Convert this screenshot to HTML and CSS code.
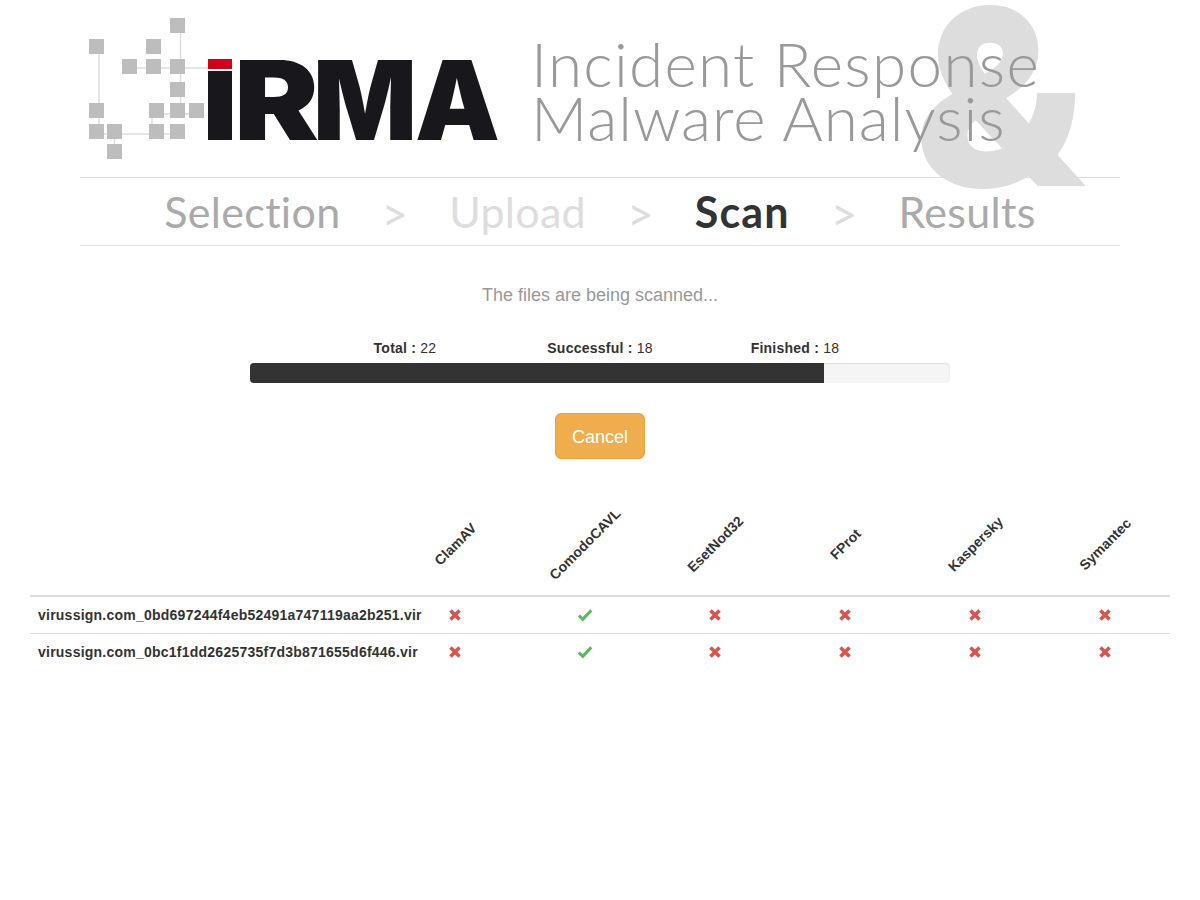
FILE: index.html
```html
<!DOCTYPE html>
<html lang="en">
<head>
<meta charset="utf-8">
<title>IRMA</title>
<link rel="stylesheet" href="styles.css">
</head>
<body>
<div class="page">
  <header class="masthead">
    <svg class="logo" width="430" height="177" viewBox="80 0 430 177" role="img" aria-label="IRMA">
      <g class="logo-lines">
        <path d="M180.500 33V103M99 54V124M137 68H208M104 134H107M122 134H170M164 114H189M152 118V124M114.500 139V144M99 118V124"/>
      </g>
      <g class="logo-nodes">
        <rect x="170" y="18" width="15" height="15"/>
        <rect x="89" y="39" width="15" height="15"/>
        <rect x="146" y="39" width="15" height="15"/>
        <rect x="122" y="59" width="15" height="15"/>
        <rect x="146" y="59" width="15" height="15"/>
        <rect x="170" y="59" width="15" height="15"/>
        <rect x="170" y="82" width="15" height="15"/>
        <rect x="89" y="103" width="15" height="15"/>
        <rect x="149" y="103" width="15" height="15"/>
        <rect x="170" y="103" width="15" height="15"/>
        <rect x="189" y="103" width="15" height="15"/>
        <rect x="89" y="124" width="15" height="15"/>
        <rect x="107" y="124" width="15" height="15"/>
        <rect x="149" y="124" width="15" height="15"/>
        <rect x="170" y="124" width="15" height="15"/>
        <rect x="107" y="144" width="15" height="15"/>
      </g>
      <rect class="logo-red" x="208" y="59" width="24" height="10"/>
      <rect class="logo-black" x="208" y="71" width="24" height="69"/>
      <text class="logo-text" x="234" y="139.500" textLength="85" lengthAdjust="spacingAndGlyphs">R</text>
      <text class="logo-text" x="313" y="139.500" textLength="104" lengthAdjust="spacingAndGlyphs">M</text>
      <text class="logo-text" x="415" y="139.500" textLength="85" lengthAdjust="spacingAndGlyphs">A</text>
    </svg>
    <h1 class="title"><span class="t1">Incident Response</span><br><span class="t2">Malware Analysis</span></h1>
    <span class="amp">&amp;</span>
  </header>

  <nav class="steps">
    <span class="step step-done s-selection">Selection</span>
    <span class="sep">&gt;</span>
    <span class="step step-off s-upload">Upload</span>
    <span class="sep">&gt;</span>
    <span class="step step-active s-scan">Scan</span>
    <span class="sep">&gt;</span>
    <span class="step step-done s-results">Results</span>
  </nav>

  <p class="message">The files are being scanned...</p>

  <div class="stats">
    <div><b>Total :</b> 22</div>
    <div><b>Successful :</b> 18</div>
    <div><b>Finished :</b> 18</div>
  </div>
  <div class="progress"><div class="progress-bar" style="width:82%"></div></div>

  <div class="actions"><button class="btn-cancel" type="button">Cancel</button></div>

  <table class="results">
    <colgroup>
      <col class="col-name">
      <col class="col-av"><col class="col-av"><col class="col-av"><col class="col-av"><col class="col-av"><col class="col-av">
    </colgroup>
    <thead>
      <tr>
        <th></th>
        <th><span>ClamAV</span></th>
        <th><span>ComodoCAVL</span></th>
        <th><span>EsetNod32</span></th>
        <th><span>FProt</span></th>
        <th><span>Kaspersky</span></th>
        <th><span>Symantec</span></th>
      </tr>
    </thead>
    <tbody>
      <tr>
        <td class="name">virussign.com_0bd697244f4eb52491a747119aa2b251.vir</td>
        <td><svg class="ic no" viewBox="0 0 14 14"><path d="M2.500 2.500L11.500 11.500M11.500 2.500L2.500 11.500"/></svg></td>
        <td><svg class="ic yes" viewBox="0 0 14 14"><path d="M0.800 7.500L4.800 11.300L13.300 2.300"/></svg></td>
        <td><svg class="ic no" viewBox="0 0 14 14"><path d="M2.500 2.500L11.500 11.500M11.500 2.500L2.500 11.500"/></svg></td>
        <td><svg class="ic no" viewBox="0 0 14 14"><path d="M2.500 2.500L11.500 11.500M11.500 2.500L2.500 11.500"/></svg></td>
        <td><svg class="ic no" viewBox="0 0 14 14"><path d="M2.500 2.500L11.500 11.500M11.500 2.500L2.500 11.500"/></svg></td>
        <td><svg class="ic no" viewBox="0 0 14 14"><path d="M2.500 2.500L11.500 11.500M11.500 2.500L2.500 11.500"/></svg></td>
      </tr>
      <tr>
        <td class="name">virussign.com_0bc1f1dd2625735f7d3b871655d6f446.vir</td>
        <td><svg class="ic no" viewBox="0 0 14 14"><path d="M2.500 2.500L11.500 11.500M11.500 2.500L2.500 11.500"/></svg></td>
        <td><svg class="ic yes" viewBox="0 0 14 14"><path d="M0.800 7.500L4.800 11.300L13.300 2.300"/></svg></td>
        <td><svg class="ic no" viewBox="0 0 14 14"><path d="M2.500 2.500L11.500 11.500M11.500 2.500L2.500 11.500"/></svg></td>
        <td><svg class="ic no" viewBox="0 0 14 14"><path d="M2.500 2.500L11.500 11.500M11.500 2.500L2.500 11.500"/></svg></td>
        <td><svg class="ic no" viewBox="0 0 14 14"><path d="M2.500 2.500L11.500 11.500M11.500 2.500L2.500 11.500"/></svg></td>
        <td><svg class="ic no" viewBox="0 0 14 14"><path d="M2.500 2.500L11.500 11.500M11.500 2.500L2.500 11.500"/></svg></td>
      </tr>
    </tbody>
  </table>
</div>
</body>
</html>
```
FILE: styles.css
```css
* { box-sizing: border-box; }
html, body { margin: 0; padding: 0; background: #fff; }
body { font-family: "Liberation Sans", Arial, sans-serif; font-size: 14px; line-height: 20px; color: #333; }
.page { width: 1140px; margin: 0 auto; }

.masthead {
  position: relative;
  display: flex;
  width: 1040px;
  height: 178px;
  margin: 0 auto;
  border-bottom: 1px solid #ddd;
}
.logo { display: block; flex: none; }
.logo-lines path { fill: none; stroke: #ddd; stroke-width: 1.500; }
.logo-nodes rect { fill: #bdbdbd; }
.logo-red { fill: #d0021b; }
.logo-black { fill: #18181c; }
.logo-text { font-family: Inter, "Liberation Sans", sans-serif; font-weight: 900; font-size: 110px; fill: #18181c; }

.title {
  position: relative;
  z-index: 2;
  margin: 36px 0 0 21px;
  font-family: Lato, sans-serif;
  font-weight: 300;
  font-size: 62px;
  line-height: 54px;
  color: #999;
  white-space: nowrap;
}
.t1 { letter-spacing: 1.300px; }
.t2 { letter-spacing: 1px; }
.amp {
  position: absolute;
  z-index: 1;
  left: 834px;
  top: -53px;
  font-family: Inter, sans-serif;
  font-weight: 900;
  font-size: 245px;
  line-height: 300px;
  color: #ddd;
}

.steps {
  display: flex;
  justify-content: center;
  align-items: center;
  gap: 41px;
  width: 1040px;
  height: 68px;
  margin: 0 auto;
  border-bottom: 1px solid #ddd;
  font-family: Lato, sans-serif;
  font-size: 43px;
  letter-spacing: .3px;
}
.step-done { color: #aaa; }
.step-off { color: #ddd; }
.step-active { color: #333; font-weight: 700; letter-spacing: 1.200px; }
.sep { color: #ddd; font-size: 46px; letter-spacing: 0; padding-top: 4px; }

.message {
  margin: 39px 0 0;
  text-align: center;
  font-size: 18px;
  line-height: 20px;
  color: #999;
}
.stats {
  display: grid;
  grid-template-columns: repeat(3, 195px);
  justify-content: center;
  margin-top: 33px;
  text-align: center;
  letter-spacing: .235px;
}
.progress {
  width: 700px;
  height: 20px;
  margin: 5px auto 0;
  border-radius: 4px;
  overflow: hidden;
  background: #f5f5f5;
  box-shadow: inset 0 1px 2px rgba(0,0,0,.1);
}
.progress-bar { height: 100%; background: #333; }

.actions { margin-top: 30px; text-align: center; }
.btn-cancel {
  display: inline-block;
  height: 46px;
  padding: 11px 16px 9px;
  border: 1px solid #eea236;
  border-radius: 6px;
  background: #f0ad4e;
  color: #fff;
  font-family: inherit;
  font-size: 18px;
  line-height: 24px;
}

.results {
  width: 1140px;
  margin-top: 37px;
  table-layout: fixed;
  border-collapse: collapse;
}
.col-name { width: 360px; }
.col-av { width: 130px; }
.results th {
  height: 100px;
  padding: 0 0 4px;
  text-align: center;
  vertical-align: middle;
  border-bottom: 2px solid #ddd;
}
.results th span { display: inline-block; transform: rotate(-45deg); white-space: nowrap; }
.results td {
  height: 37px;
  padding: 8px;
  text-align: center;
  vertical-align: top;
}
.results tbody tr + tr td { border-top: 1px solid #ddd; }
.results td.name { text-align: left; font-weight: 700; white-space: nowrap; letter-spacing: .235px; }
.ic { display: inline-block; width: 14px; height: 14px; vertical-align: top; margin-top: 3px; fill: none; }
.no { stroke: #d9534f; stroke-width: 3.600; }
.yes { stroke: #5cb85c; stroke-width: 3; }
```
